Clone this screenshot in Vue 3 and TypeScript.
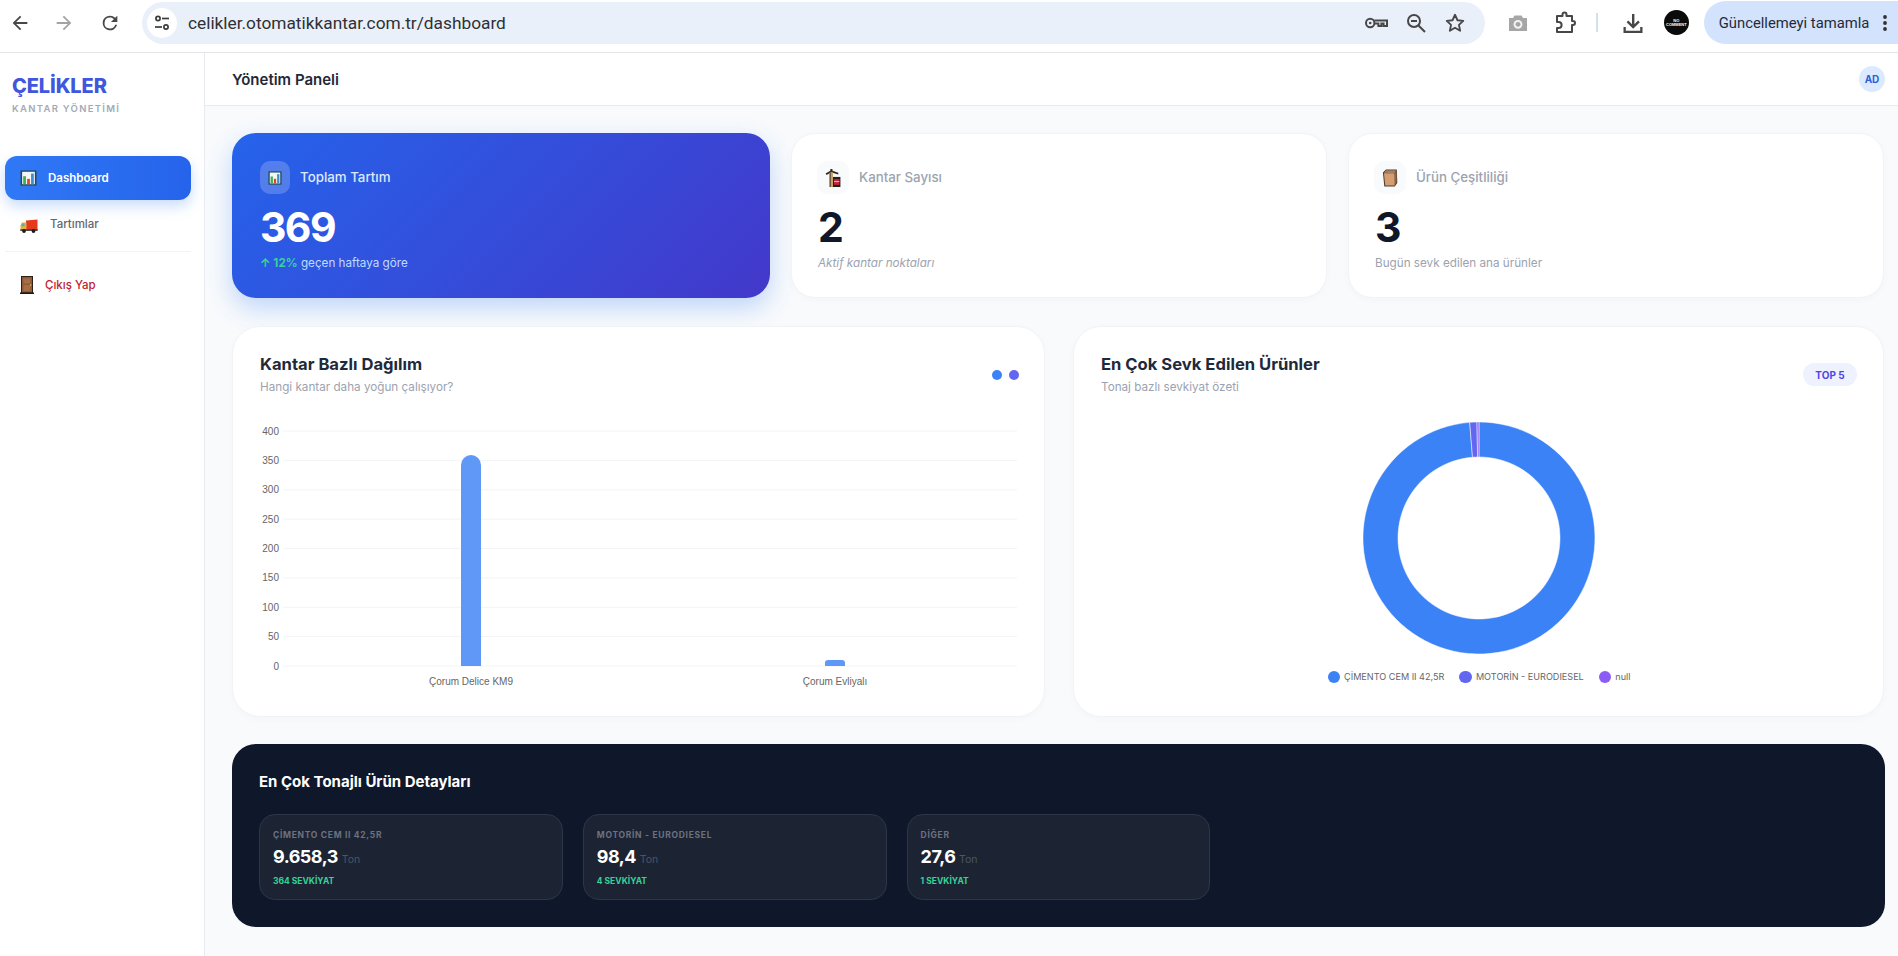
<script setup lang="ts">
const stats = [
  { title: 'Kantar Sayısı', value: '2', note: 'Aktif kantar noktaları', icon: '#e-crane', italic: true },
  { title: 'Ürün Çeşitliliği', value: '3', note: 'Bugün sevk edilen ana ürünler', icon: '#e-box', italic: false },
]
const ticks = [400, 350, 300, 250, 200, 150, 100, 50, 0].map((v, i) => ({ v, y: 11 + i * 29.375 }))
const cx = 116
const cy = 116
const R = 116
const r = 81
function pt(rad: number, deg: number): string {
  const a = ((deg - 90) * Math.PI) / 180
  return `${(cx + rad * Math.cos(a)).toFixed(2)} ${(cy + rad * Math.sin(a)).toFixed(2)}`
}
function arc(from: number, to: number): string {
  const large = to - from > 180 ? 1 : 0
  return `M${pt(R, from)} A${R} ${R} 0 ${large} 1 ${pt(R, to)} L${pt(r, to)} A${r} ${r} 0 ${large} 0 ${pt(r, from)} Z`
}
const slices = [
  { d: arc(0, 355.4), c: '#3b82f6' },
  { d: arc(355.4, 359), c: '#6366f1' },
  { d: arc(359, 359.99), c: '#8b5cf6' },
]
const legend = [
  { t: 'ÇİMENTO CEM II 42,5R', c: '#3b82f6' },
  { t: 'MOTORİN - EURODIESEL', c: '#6366f1' },
  { t: 'null', c: '#8b5cf6' },
]
const tiles = [
  { name: 'ÇİMENTO CEM II 42,5R', ton: '9.658,3', ship: '364 SEVKİYAT' },
  { name: 'MOTORİN - EURODIESEL', ton: '98,4', ship: '4 SEVKİYAT' },
  { name: 'DİĞER', ton: '27,6', ship: '1 SEVKİYAT' },
]
</script>

<template>
  <div class="root">
    <svg class="defs" width="0" height="0" aria-hidden="true">
      <symbol id="e-chart" viewBox="0 0 16 18" preserveAspectRatio="none">
        <rect x="0.5" y="0.5" width="15" height="17" fill="#1f4a5c" />
        <rect x="2" y="2" width="12" height="14" fill="#f4f6f6" />
        <rect x="3" y="7" width="2.6" height="9" fill="#3fb04f" />
        <rect x="6.7" y="10" width="2.6" height="6" fill="#e2452f" />
        <rect x="10.4" y="4" width="2.6" height="12" fill="#3f8fd0" />
      </symbol>
      <symbol id="e-truck" viewBox="0 0 18 14">
        <path d="M6 1.5 17.5 0.5V11H6z" fill="#e5391f" />
        <path d="M0.5 6.5 2 3.5H6.5V11.5H0.5z" fill="#e5b33c" />
        <path d="M1.8 4.6H4.6V7.2H1.2z" fill="#6aa6b8" />
        <rect x="0.3" y="10.3" width="17.4" height="1.6" fill="#3a3a3a" />
        <circle cx="4" cy="12" r="1.9" fill="#1d1d1d" />
        <circle cx="13.5" cy="12" r="1.9" fill="#1d1d1d" />
      </symbol>
      <symbol id="e-door" viewBox="0 0 14 18">
        <rect x="1" y="0" width="12" height="17" fill="#2b2019" />
        <rect x="2" y="1" width="10" height="15.5" fill="#8f5a38" />
        <rect x="3.5" y="2.5" width="7" height="5" fill="#a56c45" />
        <rect x="3.5" y="9" width="7" height="6" fill="#a56c45" />
        <circle cx="10.6" cy="9" r="0.8" fill="#e4c05a" />
        <rect x="0" y="16.5" width="14" height="1.5" fill="#1a1a1a" />
      </symbol>
      <symbol id="e-crane" viewBox="0 0 14 17">
        <path d="M0 4.2 4.5 1.6V0H6.5V1.6L12 3.6V5.2L6.5 3.6H4.5L1 5.6z" fill="#2c2a26" />
        <rect x="3.8" y="3" width="3.2" height="14" fill="#c9a26a" />
        <rect x="3.8" y="3" width="1" height="14" fill="#4a3a25" />
        <rect x="7" y="7.5" width="7" height="9.5" fill="#2b1d1d" />
        <rect x="8" y="9.5" width="5" height="5.5" fill="#c3283a" />
        <rect x="8" y="11.5" width="5" height="0.8" fill="#e8d8c8" />
      </symbol>
      <symbol id="e-box" viewBox="0 0 16 19">
        <path d="M0.5 3.6 3.8.4h11.4l.5 14-2.6 4.2H2z" fill="#4f3a2b" />
        <path d="M1.6 4.4H12.8L13 17.4H3z" fill="#d49e72" />
        <path d="M1.6 3.9 4.2 1.4H14.4L12.8 4.4z" fill="#a58069" />
        <path d="M13.2 4.6 14.8 2 15 13.8 13.4 16.6z" fill="#8d6a4c" />
      </symbol>
    </svg>

    <div class="browser">
      <svg class="bi" width="22" height="22" viewBox="0 0 24 24"><path d="M20 11H7.8l5.6-5.6L12 4l-8 8 8 8 1.4-1.4L7.8 13H20z" fill="#474747" /></svg>
      <svg class="bi b2" width="22" height="22" viewBox="0 0 24 24"><path d="M4 11h12.2l-5.6-5.6L12 4l8 8-8 8-1.4-1.4 5.6-5.6H4z" fill="#a3a3a3" /></svg>
      <svg class="bi b3" width="22" height="22" viewBox="0 0 24 24"><path d="M17.65 6.35A7.95 7.95 0 0 0 12 4a8 8 0 1 0 7.75 10h-2.08A6 6 0 1 1 12 6c1.66 0 3.14.69 4.22 1.78L13 11h7V4z" fill="#474747" /></svg>
      <div class="omni">
        <div class="tune">
          <svg width="18" height="18" viewBox="0 0 18 18" fill="none" stroke="#3c3c3c" stroke-width="1.7">
            <circle cx="5" cy="4.5" r="2.1" /><path d="M9 4.5h7" />
            <circle cx="13" cy="13" r="2.1" /><path d="M2 13h7" />
          </svg>
        </div>
        <span class="url">celikler.otomatikkantar.com.tr/dashboard</span>
        <svg class="oi" width="24" height="24" viewBox="0 0 24 24" fill="none" stroke="#474747" stroke-width="2">
          <circle cx="6.2" cy="12" r="4.2" />
          <path d="M10.4 9.6H23V15H19.6V12.4H17.4V15H14.4V12.4H10.4" />
          <circle cx="6.2" cy="12" r="1.3" fill="#474747" stroke="none" />
        </svg>
        <svg class="oi" width="22" height="22" viewBox="0 0 22 22" fill="none" stroke="#474747" stroke-width="2">
          <circle cx="9" cy="9" r="6" /><path d="M13.5 13.5 20 20M6 9h6" />
        </svg>
        <svg class="oi last" width="22" height="22" viewBox="0 0 24 24" fill="none" stroke="#474747" stroke-width="2" stroke-linejoin="round">
          <path d="m12 3 2.7 6 6.3.7-4.7 4.3 1.3 6.5L12 17.2l-5.6 3.3 1.3-6.5L3 9.7 9.3 9z" />
        </svg>
      </div>
      <svg class="camera" width="22" height="22" viewBox="0 0 22 22">
        <path d="M2 6h4l1.5-2.5h7L16 6h4v13H2z" fill="#a6a6a6" />
        <circle cx="11" cy="12.3" r="4.4" fill="#f2f2f2" />
        <circle cx="11" cy="12.3" r="2.4" fill="#a6a6a6" />
      </svg>
      <svg class="puzzle" width="22" height="24" viewBox="0 0 22 24" fill="none" stroke="#474747" stroke-width="2" stroke-linejoin="round">
        <path d="M3 5h5.5V3.5a2 2 0 0 1 4 0V5H18v5h1a2 2 0 0 1 0 4h-1v7H3v-4h1.6a3 3 0 0 0 0-6H3z" />
      </svg>
      <span class="sep"></span>
      <svg class="dl" width="22" height="22" viewBox="0 0 22 22" fill="#474747">
        <path d="M10 2h2.4v10.2l3.7-3.7 1.7 1.7-6.6 6.6-6.6-6.6 1.7-1.7 3.7 3.7z" />
        <path d="M1.5 15h2.3v3.7h14.4V15h2.3v6H1.5z" />
      </svg>
      <div class="nc"><span>NO<br />COMMENT</span></div>
      <div class="update">
        <span>Güncellemeyi tamamla</span>
        <svg width="4" height="16" viewBox="0 0 4 16" fill="#303030"><circle cx="2" cy="2" r="1.9" /><circle cx="2" cy="8" r="1.9" /><circle cx="2" cy="14" r="1.9" /></svg>
      </div>
    </div>

    <div class="app">
      <aside class="side">
        <div class="logo">ÇELİKLER</div>
        <div class="tag">KANTAR YÖNETİMİ</div>
        <a class="nav active">
          <svg class="e" width="17" height="16"><use href="#e-chart" width="17" height="16" /></svg>
          <span>Dashboard</span>
        </a>
        <a class="nav plain">
          <svg class="e" width="18" height="14"><use href="#e-truck" /></svg>
          <span>Tartımlar</span>
        </a>
        <div class="rule"></div>
        <a class="nav exit">
          <svg class="e" width="14" height="18"><use href="#e-door" /></svg>
          <span>Çıkış Yap</span>
        </a>
      </aside>

      <div class="page">
        <header class="top">
          <h1>Yönetim Paneli</h1>
          <div class="avatar">AD</div>
        </header>
        <main class="main">
          <section class="stats">
            <div class="stat hero">
              <div class="stat-head">
                <div class="box glass"><svg width="14" height="14"><use href="#e-chart" width="14" height="14" /></svg></div>
                <span>Toplam Tartım</span>
              </div>
              <div class="num">369</div>
              <div class="note"><b>↑ 12%</b> geçen haftaya göre</div>
            </div>
            <div v-for="s in stats" :key="s.title" class="stat card">
              <div class="stat-head">
                <div class="box"><svg width="16" height="18"><use :href="s.icon" /></svg></div>
                <span>{{ s.title }}</span>
              </div>
              <div class="num">{{ s.value }}</div>
              <div class="note" :class="{ it: s.italic }">{{ s.note }}</div>
            </div>
          </section>

          <section class="charts">
            <div class="panel card">
              <div class="phead">
                <div>
                  <h2>Kantar Bazlı Dağılım</h2>
                  <p>Hangi kantar daha yoğun çalışıyor?</p>
                </div>
                <div class="dots"><i class="d1"></i><i class="d2"></i></div>
              </div>
              <svg class="bars" width="757" height="280" viewBox="0 0 757 280">
                <g v-for="t in ticks" :key="t.v">
                  <line x1="23" :y1="t.y" x2="757" :y2="t.y" stroke="#f3f4f6" />
                  <text x="19" :y="t.y + 3.5" text-anchor="end">{{ t.v }}</text>
                </g>
                <path d="M201 246V45a10 10 0 0 1 20 0V246z" fill="#6098f8" />
                <path d="M565 246v-3a3 3 0 0 1 3-3h14a3 3 0 0 1 3 3v3z" fill="#6098f8" />
                <text x="211" y="265" text-anchor="middle">Çorum Delice KM9</text>
                <text x="575" y="265" text-anchor="middle">Çorum Evliyalı</text>
              </svg>
            </div>
            <div class="panel card">
              <div class="phead">
                <div>
                  <h2>En Çok Sevk Edilen Ürünler</h2>
                  <p>Tonaj bazlı sevkiyat özeti</p>
                </div>
                <div class="pill">TOP 5</div>
              </div>
              <svg class="donut" width="232" height="232" viewBox="0 0 232 232">
                <path v-for="s in slices" :key="s.c" :d="s.d" :fill="s.c" stroke="#fff" stroke-width="0.5" />
              </svg>
              <div class="legend">
                <span v-for="l in legend" :key="l.t"><i :style="{ background: l.c }"></i>{{ l.t }}</span>
              </div>
            </div>
          </section>

          <section class="dark">
            <h3>En Çok Tonajlı Ürün Detayları</h3>
            <div class="tiles">
              <div v-for="t in tiles" :key="t.name" class="tile">
                <div class="tname">{{ t.name }}</div>
                <div class="tton">{{ t.ton }} <small>Ton</small></div>
                <div class="tship">{{ t.ship }}</div>
              </div>
            </div>
          </section>
        </main>
      </div>
    </div>
  </div>
</template>

<style>
html, body { margin: 0; background: #f8fafc; }
</style>

<style scoped>
.root { width: 1898px; height: 956px; overflow: hidden; display: flex; flex-direction: column; font-family: Inter, "Liberation Sans", sans-serif; background: #f8fafc; }
.defs { position: absolute; }
svg { display: block; flex: none; }

.browser { height: 53px; flex: none; box-sizing: border-box; background: #fff; border-bottom: 1px solid #e3e5e8; display: flex; align-items: center; padding: 0 0 7px 9px; }
.bi { margin-right: 22px; }
.b2 { margin-right: 24px; }
.b3 { margin-right: 21px; }
.omni { width: 1343px; height: 42px; border-radius: 21px; background: #e9f0fa; display: flex; align-items: center; padding-left: 5px; box-sizing: border-box; flex: none; }
.tune { width: 30px; height: 30px; border-radius: 50%; background: #fff; display: flex; align-items: center; justify-content: center; }
.url { margin-left: 11px; font: 400 17.3px Roboto, sans-serif; color: #2f3134; flex: 1; }
.oi { margin-right: 17px; }
.oi.last { margin-right: 19px; }
.camera { margin-left: 22px; }
.puzzle { margin-left: 25px; }
.sep { width: 2px; height: 19px; background: #d3e0f0; margin-left: 20px; }
.dl { margin-left: 24px; }
.nc { width: 25px; height: 25px; border-radius: 50%; background: #0b0b0b; margin-left: 20px; display: flex; align-items: center; justify-content: center; text-align: center; color: #fff; font: 700 4px/4px "Liberation Sans", sans-serif; }
.update { width: 196px; height: 43px; margin-left: 15px; background: #d3e3fd; border-radius: 22px 0 0 22px; display: flex; align-items: center; box-sizing: border-box; padding-left: 15px; font: 400 14.8px Roboto, sans-serif; color: #1f2a3c; }
.update svg { margin-left: 14px; }

.app { flex: 1; display: flex; min-height: 0; }
.side { width: 205px; flex: none; box-sizing: border-box; background: #fff; border-right: 1px solid #e8ebf0; padding: 19px 13px 0 5px; }
.logo { margin-left: 7px; font-size: 20px; line-height: 28px; font-weight: 800; letter-spacing: -0.1px; color: #3f56df; }
.tag { margin: 3px 0 0 7px; font-size: 9.5px; line-height: 12px; font-weight: 600; letter-spacing: 1.3px; color: #a3aab5; }
.nav { display: flex; align-items: center; font-size: 11.5px; }
.nav .e { margin-left: 15px; }
.active { margin-top: 41px; height: 44px; border-radius: 12px; background: linear-gradient(90deg, #3079f6, #2563eb); color: #fff; font-weight: 600; box-shadow: 0 6px 14px rgba(59, 130, 246, 0.28); }
.active span { margin-left: 11px; }
.plain { height: 51px; color: #5f6773; font-weight: 500; }
.plain span { margin-left: 12px; margin-top: -3px; }
.rule { height: 1px; background: #f1f3f6; }
.exit { margin-top: 11px; height: 44px; color: #c2222d; font-weight: 500; }
.exit span { margin-left: 11px; }

.page { flex: 1; min-width: 0; display: flex; flex-direction: column; }
.top { height: 53px; flex: none; box-sizing: border-box; background: #fff; border-bottom: 1px solid #e8ebf0; display: flex; align-items: center; justify-content: space-between; padding: 0 13px 0 27px; }
.top h1 { margin: 0; font-size: 15px; font-weight: 600; color: #1f2937; }
.avatar { width: 26px; height: 26px; border-radius: 50%; background: #dbeafe; color: #2f5fd8; font-size: 10px; font-weight: 700; display: flex; align-items: center; justify-content: center; }

.main { padding: 27px 13px 0 27px; display: flex; flex-direction: column; gap: 27px; }
.stats { display: grid; grid-template-columns: 538px 536px 536px; gap: 21px; height: 165px; }
.card { background: #fff; border: 1px solid #f1f3f7; box-shadow: 0 2px 8px rgba(15, 23, 42, 0.025); box-sizing: border-box; }
.stat { border-radius: 24px; padding: 27px 25px 0; box-sizing: border-box; }
.hero { background: linear-gradient(135deg, #2563eb, #4338ca); box-shadow: 0 10px 24px rgba(59, 130, 246, 0.3); padding: 28px 28px 0; }
.stat-head { display: flex; align-items: center; gap: 10px; font-size: 13.3px; font-weight: 500; color: #9ca3af; }
.stat-head span { margin-top: -2px; }
.hero .stat-head { color: #dbeafe; }
.box { width: 32px; height: 33px; border-radius: 10px; background: #f8fafc; display: flex; align-items: center; justify-content: center; }
.box.glass { width: 30px; background: rgba(255, 255, 255, 0.2); }
.num { margin-top: 8px; font-size: 41px; line-height: 50px; font-weight: 700; letter-spacing: -1.6px; color: #0f172a; }
.card .num, .card .note { margin-left: 1px; }
.hero .num { color: #fff; }
.note { margin-top: 3px; font-size: 11.7px; line-height: 16px; color: #9ca3af; }
.note.it { font-style: italic; }
.hero .note { color: #bfdbfe; }
.hero .note b { color: #34d399; font-weight: 700; }

.charts { display: grid; grid-template-columns: 813px 811px; gap: 28px; height: 391px; margin-top: 1px; }
.panel { border-radius: 28px; padding: 27px 26px 0 27px; }
.phead { display: flex; justify-content: space-between; align-items: center; height: 43px; }
h2 { margin: 0; font-size: 16.6px; line-height: 20px; font-weight: 700; color: #1e293b; }
.phead p { margin: 3px 0 0; font-size: 11.7px; line-height: 20px; color: #9ca3af; }
.dots { display: flex; gap: 7px; margin: -2px -1px 0 0; }
.dots i { width: 10px; height: 10px; border-radius: 50%; }
.d1 { background: #3b82f6; }
.d2 { background: #6366f1; }
.pill { height: 23px; width: 54px; margin-top: -2px; border-radius: 12px; background: #eef2ff; color: #4f46e5; font-size: 10px; font-weight: 700; display: flex; align-items: center; justify-content: center; }
.bars { margin-top: 23px; }
.bars text { font: 10px "Liberation Sans", sans-serif; fill: #666; }
.donut { margin: 25px auto 0; }
.legend { display: flex; justify-content: center; gap: 15px; margin-top: 15px; font-size: 9.1px; line-height: 16px; color: #666; }
.legend span { display: flex; align-items: center; gap: 4px; }
.legend i { width: 12.5px; height: 12.5px; border-radius: 50%; }

.dark { height: 183px; box-sizing: border-box; background: #0f172a; border-radius: 24px; padding: 29px 27px 0; }
h3 { margin: 0; font-size: 15px; line-height: 18px; font-weight: 700; color: #fff; }
.tiles { margin-top: 23px; display: grid; grid-template-columns: repeat(5, 1fr); gap: 20px; }
.tile { height: 86px; box-sizing: border-box; background: #1c2333; border: 1px solid #2d3648; border-radius: 16px; padding: 14px 13px 0; }
.tname { font-size: 8.5px; line-height: 12px; font-weight: 700; letter-spacing: 0.7px; color: #6b7280; }
.tton { margin-top: 4px; font-size: 18px; line-height: 24px; font-weight: 700; letter-spacing: -0.5px; color: #fff; }
.tton small { font-size: 10.5px; font-weight: 400; letter-spacing: 0; color: #4b5563; }
.tship { margin-top: 3px; font-size: 8.5px; line-height: 12px; font-weight: 700; color: #34d399; }
</style>
